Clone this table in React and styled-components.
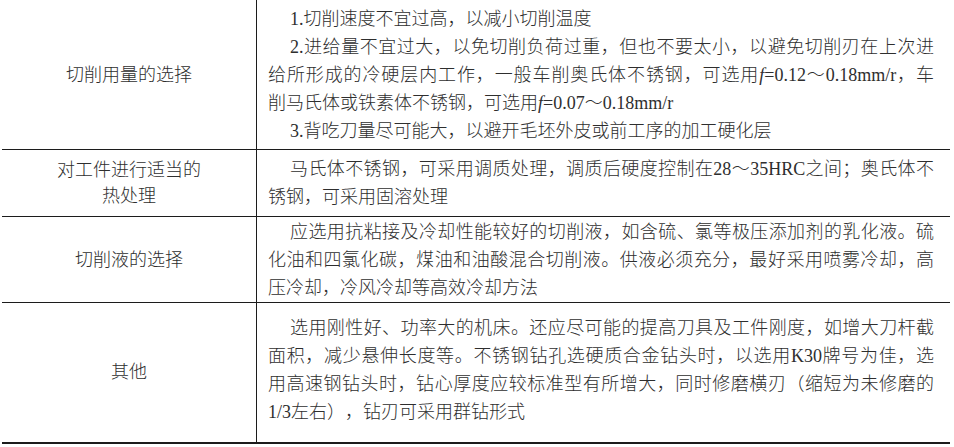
import React from 'react';
import styled, { createGlobalStyle } from 'styled-components';

const GlobalStyle = createGlobalStyle`
  html, body {
    margin: 0;
    padding: 0;
    background: #ffffff;
  }
  body {
    font-family: "Liberation Serif", "Noto Sans CJK SC", serif;
    color: #2e2e2e;
  }
`;

const rows = [
  {
    label: ['切削用量的选择'],
    height: 150,
    lines: [
      { text: '1.切削速度不宜过高，以减小切削温度', indent: true },
      { text: '2.进给量不宜过大，以免切削负荷过重，但也不要太小，以避免切削刃在上次进', indent: true, fill: true },
      { text: ['给所形成的冷硬层内工作，一般车削奥氏体不锈钢，可选用', <i key="f">f</i>, '=0.12～0.18mm/r，车'], fill: true },
      { text: ['削马氏体或铁素体不锈钢，可选用', <i key="f">f</i>, '=0.07～0.18mm/r'] },
      { text: '3.背吃刀量尽可能大，以避开毛坯外皮或前工序的加工硬化层', indent: true },
    ],
  },
  {
    label: ['对工件进行适当的', '热处理'],
    height: 67,
    lines: [
      { text: '马氏体不锈钢，可采用调质处理，调质后硬度控制在28～35HRC之间；奥氏体不', indent: true, fill: true },
      { text: '锈钢，可采用固溶处理' },
    ],
  },
  {
    label: ['切削液的选择'],
    height: 86,
    lines: [
      { text: '应选用抗粘接及冷却性能较好的切削液，如含硫、氯等极压添加剂的乳化液。硫', indent: true, fill: true },
      { text: '化油和四氯化碳，煤油和油酸混合切削液。供液必须充分，最好采用喷雾冷却，高', fill: true },
      { text: '压冷却，冷风冷却等高效冷却方法' },
    ],
  },
  {
    label: ['其他'],
    height: 141,
    last: true,
    lines: [
      { text: '选用刚性好、功率大的机床。还应尽可能的提高刀具及工件刚度，如增大刀杆截', indent: true, fill: true },
      { text: '面积，减少悬伸长度等。不锈钢钻孔选硬质合金钻头时，以选用K30牌号为佳，选', fill: true },
      { text: '用高速钢钻头时，钻心厚度应较标准型有所增大，同时修磨横刃（缩短为未修磨的', fill: true },
      { text: '1/3左右），钻刃可采用群钻形式' },
    ],
  },
];

export default function App() {
  return (
    <>
      <GlobalStyle />
      <Page>
        <Table $rows={rows.map(r => `${r.height}px`).join(' ')}>
          {rows.map((row, i) => (
            <React.Fragment key={i}>
              <LabelCell $last={row.last}>
                {row.label.map((l, j) => <LabelLine key={j}>{l}</LabelLine>)}
              </LabelCell>
              <TextCell $last={row.last}>
                {row.lines.map((line, j) => (
                  <Line key={j} $indent={line.indent} $fill={line.fill}>
                    {line.text}
                  </Line>
                ))}
              </TextCell>
            </React.Fragment>
          ))}
        </Table>
      </Page>
    </>
  );
}

const Page = styled.div`
  width: 954px;
  height: 447px;
  padding-left: 2px;
  box-sizing: border-box;
  overflow: hidden;
`;

const Table = styled.div`
  width: 948px;
  display: grid;
  grid-template-columns: 255px 693px;
  grid-template-rows: ${p => p.$rows};
`;

const Cell = styled.div`
  box-sizing: border-box;
  border-bottom: ${p => (p.$last ? '2px' : '1px')} solid #1c1c1c;
  display: flex;
  flex-direction: column;
  justify-content: center;
  font-size: 18px;
  font-weight: 300;
  text-spacing-trim: space-all;
`;

const LabelCell = styled(Cell)`
  border-right: 1px solid #1c1c1c;
  align-items: center;
  text-align: center;
  padding-bottom: ${p => (p.$last ? '2px' : '0')};
`;

const LabelLine = styled.div`
  line-height: 26px;
`;

const TextCell = styled(Cell)`
  padding: 0 16px ${p => (p.$last ? '5px' : '0')} 11px;
`;

const Line = styled.div`
  line-height: 28px;
  padding-left: ${p => (p.$indent ? '22px' : '0')};
  text-align: ${p => (p.$fill ? 'justify' : 'left')};
  text-align-last: ${p => (p.$fill ? 'justify' : 'left')};
  white-space: nowrap;

  i {
    font-style: italic;
  }
`;
